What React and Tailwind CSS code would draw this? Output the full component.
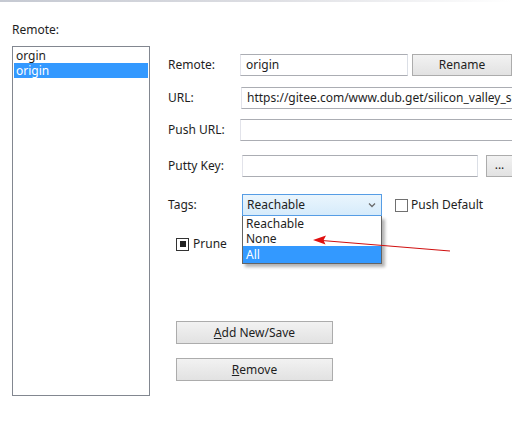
import React from 'react'

const font = { fontFamily: '"Noto Sans", "Open Sans", sans-serif' }

function Field({ label, labelW, children, className = '' }) {
  return (
    <div className={`flex items-center h-[22px] ${className}`}>
      <span className={`shrink-0 ${labelW} text-[12px] text-[#1e1e1e]`}>{label}</span>
      {children}
    </div>
  )
}

function Input({ value, className = '' }) {
  return (
    <div className={`h-[22px] border border-[#abadb3] border-l-[#e2e3ea] border-r-[#dbdfe6] bg-white pl-[5px] text-[12px] leading-[20px] whitespace-nowrap overflow-hidden ${className}`}>
      {value}
    </div>
  )
}

function Button({ children, className = '' }) {
  return (
    <div className={`flex items-center justify-center border border-[#acacac] bg-gradient-to-b from-[#f2f2f2] to-[#e2e2e2] text-[12px] text-[#1e1e1e] ${className}`}>
      {children}
    </div>
  )
}

export default function App() {
  return (
    <div className="w-[512px] h-[439px] bg-white overflow-hidden relative text-[#1e1e1e]" style={font}>
      {/* top strip */}
      <div className="h-[2px] bg-gradient-to-r from-[#c5c9d2] via-[#dcdde2] to-white" />

      <div className="flex">
        {/* left: remote list */}
        <div className="pl-[12px] w-[168px] shrink-0">
          <div className="mt-[20px] h-[16px] text-[12px] leading-[16px]">Remote:</div>
          <div className="mt-[8px] w-[138px] h-[350px] border border-[#828790] bg-white p-[1px]">
            <div className="h-[15px] pl-[2px] text-[12px] leading-[15px] overflow-hidden">orgin</div>
            <div className="h-[15px] pl-[2px] text-[12px] leading-[15px] overflow-hidden bg-[#3399ff] text-white">origin</div>
          </div>
        </div>

        {/* right: form */}
        <div className="flex-1 pt-[52px] relative">
          <Field label="Remote:" labelW="w-[72px]">
            <Input value="origin" className="w-[168px]" />
            <Button className="ml-[4px] w-[100px] h-[22px] shrink-0">Rename</Button>
          </Field>

          <Field label="URL:" labelW="w-[73px]" className="mt-[11px]">
            <Input value="https://gitee.com/www.dub.get/silicon_valley_sh.git" className="w-[300px] shrink-0" />
          </Field>

          <Field label="Push URL:" labelW="w-[72px]" className="mt-[10px]">
            <Input value="" className="w-[300px] shrink-0" />
          </Field>

          <Field label="Putty Key:" labelW="w-[74px]" className="mt-[14px]">
            <Input value="" className="w-[236px] shrink-0" />
            <Button className="ml-[8px] w-[27px] h-[22px] shrink-0 text-[10px] leading-none pb-[2px]">...</Button>
          </Field>

          <Field label="Tags:" labelW="w-[74px]" className="mt-[17px] relative">
            <div className="relative w-[140px] h-[22px] shrink-0">
              <div className="h-full flex items-center justify-between border border-[#569de5] bg-gradient-to-b from-[#eaf5fd] to-[#d6ebfb] pl-[4px] pr-[5px] text-[12px]">
                <span>Reachable</span>
                <svg width="8" height="6" viewBox="0 0 8 6">
                  <path d="M1 1.5 L4 4.5 L7 1.5" fill="none" stroke="#6b6b6b" strokeWidth="1.3" />
                </svg>
              </div>
              {/* open dropdown */}
              <div className="absolute left-0 top-[22px] w-[140px] border border-[#646464] border-t-0 bg-white shadow-[3px_3px_3px_rgba(0,0,0,0.3)] z-10">
                <div className="h-[15px] pl-[3px] text-[12px] leading-[16px] overflow-hidden">Reachable</div>
                <div className="h-[15px] pl-[3px] text-[12px] leading-[16px] overflow-hidden">None</div>
                <div className="h-[17px] pl-[3px] text-[12px] leading-[17px] bg-[#3399ff] text-white">All</div>
              </div>
            </div>
            <div className="ml-[13px] w-[13px] h-[13px] border border-[#707070] bg-white shrink-0" />
            <span className="ml-[3px] text-[12px]">Push Default</span>
          </Field>

          <div className="mt-[21px] ml-[8px] flex items-center h-[14px]">
            <div className="w-[13px] h-[13px] border border-[#333] bg-white flex items-center justify-center">
              <div className="w-[6px] h-[6px] bg-[#222]" />
            </div>
            <span className="ml-[4px] text-[12px]">Prune</span>
          </div>

          <Button className="mt-[70px] ml-[8px] w-[157px] h-[23px]">
            <span><span className="underline">A</span>dd New/Save</span>
          </Button>
          <Button className="mt-[14px] ml-[8px] w-[157px] h-[23px]">
            <span><span className="underline">R</span>emove</span>
          </Button>
        </div>
      </div>

      {/* red annotation arrow */}
      <svg className="absolute left-0 top-0 pointer-events-none z-20" width="512" height="439">
        <path d="M450 251 L322 240.5" stroke="#d01010" strokeWidth="1.2" fill="none" />
        <path d="M313 240 L326 235.5 L323.5 240.3 L325.5 244.5 Z" fill="#e01010" />
      </svg>
    </div>
  )
}
